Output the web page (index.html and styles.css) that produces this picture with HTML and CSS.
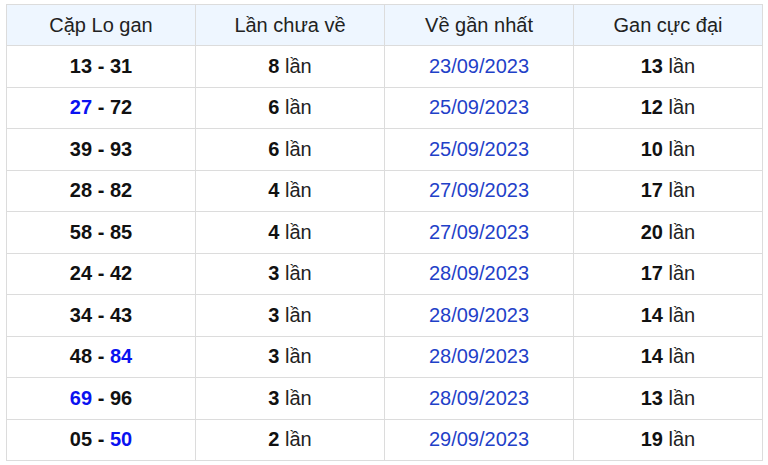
FILE: index.html
```html
<!DOCTYPE html>
<html lang="vi">
<head>
<meta charset="utf-8">
<title>Cặp Lo gan</title>
<link rel="stylesheet" href="styles.css">
</head>
<body>
<div class="wrap">
<table class="gan">
<thead>
<tr><th>Cặp Lo gan</th><th>Lần chưa về</th><th>Về gần nhất</th><th>Gan cực đại</th></tr>
</thead>
<tbody>
<tr><td class="pair">13 - 31</td><td><b>8</b> lần</td><td class="date">23/09/2023</td><td><b>13</b> lần</td></tr>
<tr><td class="pair"><span class="hl">27</span> - 72</td><td><b>6</b> lần</td><td class="date">25/09/2023</td><td><b>12</b> lần</td></tr>
<tr><td class="pair">39 - 93</td><td><b>6</b> lần</td><td class="date">25/09/2023</td><td><b>10</b> lần</td></tr>
<tr><td class="pair">28 - 82</td><td><b>4</b> lần</td><td class="date">27/09/2023</td><td><b>17</b> lần</td></tr>
<tr><td class="pair">58 - 85</td><td><b>4</b> lần</td><td class="date">27/09/2023</td><td><b>20</b> lần</td></tr>
<tr><td class="pair">24 - 42</td><td><b>3</b> lần</td><td class="date">28/09/2023</td><td><b>17</b> lần</td></tr>
<tr><td class="pair">34 - 43</td><td><b>3</b> lần</td><td class="date">28/09/2023</td><td><b>14</b> lần</td></tr>
<tr><td class="pair">48 - <span class="hl">84</span></td><td><b>3</b> lần</td><td class="date">28/09/2023</td><td><b>14</b> lần</td></tr>
<tr><td class="pair"><span class="hl">69</span> - 96</td><td><b>3</b> lần</td><td class="date">28/09/2023</td><td><b>13</b> lần</td></tr>
<tr><td class="pair">05 - <span class="hl">50</span></td><td><b>2</b> lần</td><td class="date">29/09/2023</td><td><b>19</b> lần</td></tr>
</tbody>
</table>
</div>
</body>
</html>
```
FILE: styles.css
```css
html, body {
  margin: 0;
  padding: 0;
  background: #fff;
}
.wrap {
  padding: 4px 5px 0 6px;
}
.gan {
  width: 757px;
  border-collapse: collapse;
  table-layout: fixed;
  font-family: "Liberation Sans", Arial, sans-serif;
  font-size: 20px;
  color: #222;
}
.gan th, .gan td {
  border: 1px solid #dcdcdc;
  text-align: center;
  padding: 0;
}
.gan th {
  height: 40px;
  font-weight: normal;
  background: #eef6ff;
  color: #222;
}
.gan td {
  height: 40.5px;
}
.gan b {
  font-weight: bold;
  color: #111;
}
.pair {
  font-weight: bold;
  color: #111;
}
.hl {
  color: #0a12f0;
}
.date {
  color: #1f41c8;
}
```
